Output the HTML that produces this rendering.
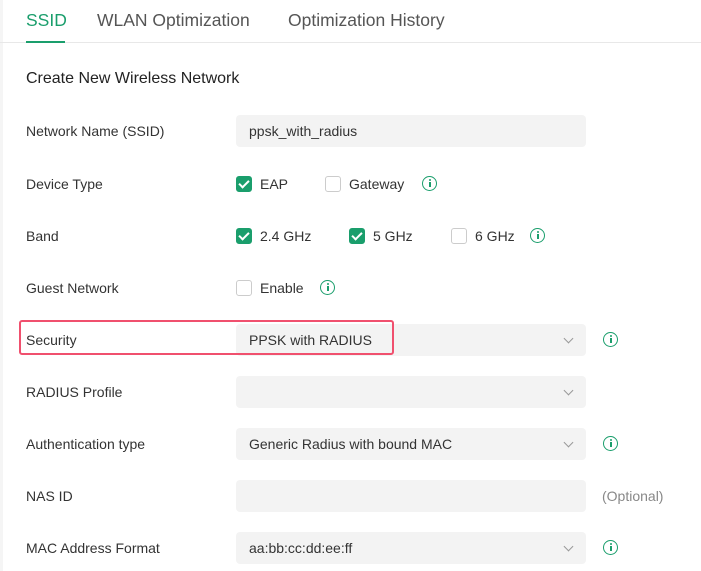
<!DOCTYPE html>
<html><head><style>
body{margin:0;width:701px;height:571px;background:#fff;font-family:"Liberation Sans",sans-serif;position:relative;overflow:hidden;color:#333}
.a{position:absolute;white-space:nowrap}
.tab{font-size:17.5px;color:#555;top:10px}
.lbl{font-size:14px;color:#333;left:26px}
.inp{position:absolute;left:236px;width:350px;height:32px;background:#f3f3f3;border-radius:4px;font-size:14px;color:#333;line-height:32px;text-indent:13px}
.chev{position:absolute;right:14px;top:11px;width:6px;height:6px;border-right:1.2px solid #999;border-bottom:1.2px solid #999;transform:rotate(45deg)}
.cb{position:absolute;width:14px;height:14px;border:1px solid #ccc;border-radius:3px;background:#fff}
.cb.on{background:#1a9e6c;border-color:#1a9e6c}
.cb.on:after{content:"";position:absolute;left:4px;top:1px;width:4px;height:8px;border-right:2px solid #fff;border-bottom:2px solid #fff;transform:rotate(45deg)}
.ct{position:absolute;font-size:14px;color:#333}
.info{position:absolute;width:13px;height:13px;border:1.5px solid #1a9e6c;border-radius:50%}
.info:before{content:"";position:absolute;left:5.5px;top:2px;width:2px;height:2px;background:#1a9e6c;border-radius:1px}
.info:after{content:"";position:absolute;left:5.5px;top:5px;width:2px;height:5px;background:#1a9e6c}
</style></head><body>
<div class="a" style="left:0;top:0;width:3px;height:571px;background:#f5f5f5"></div>
<div class="a tab" style="left:26px;color:#1a9e6c">SSID</div>
<div class="a tab" style="left:97px">WLAN Optimization</div>
<div class="a tab" style="left:288px">Optimization History</div>
<div class="a" style="left:0;top:42px;width:701px;height:1px;background:#e8e8e8"></div>
<div class="a" style="left:26px;top:41px;width:39px;height:2px;background:#1a9e6c"></div>
<div class="a" style="left:26px;top:70px;font-size:16px;color:#222">Create New Wireless Network</div>

<div class="a lbl" style="top:123px">Network Name (SSID)</div>
<div class="inp" style="top:115px">ppsk_with_radius</div>

<div class="a lbl" style="top:176px">Device Type</div>
<div class="cb on" style="left:236px;top:176px"></div><div class="ct" style="left:260px;top:176px">EAP</div>
<div class="cb" style="left:325px;top:176px"></div><div class="ct" style="left:349px;top:176px">Gateway</div>
<div class="info" style="left:422px;top:176px"></div>

<div class="a lbl" style="top:228px">Band</div>
<div class="cb on" style="left:236px;top:228px"></div><div class="ct" style="left:260px;top:228px">2.4 GHz</div>
<div class="cb on" style="left:349px;top:228px"></div><div class="ct" style="left:373px;top:228px">5 GHz</div>
<div class="cb" style="left:451px;top:228px"></div><div class="ct" style="left:475px;top:228px">6 GHz</div>
<div class="info" style="left:530px;top:228px"></div>

<div class="a lbl" style="top:280px">Guest Network</div>
<div class="cb" style="left:236px;top:280px"></div><div class="ct" style="left:260px;top:280px">Enable</div>
<div class="info" style="left:320px;top:280px"></div>

<div class="a lbl" style="top:332px">Security</div>
<div class="inp" style="top:324px">PPSK with RADIUS<div class="chev"></div></div>
<div class="a" style="left:19px;top:320px;width:371px;height:31px;border:2px solid #f0506e;border-radius:3px"></div>
<div class="info" style="left:603px;top:332px"></div>

<div class="a lbl" style="top:384px">RADIUS Profile</div>
<div class="inp" style="top:376px"><div class="chev"></div></div>

<div class="a lbl" style="top:436px">Authentication type</div>
<div class="inp" style="top:428px">Generic Radius with bound MAC<div class="chev"></div></div>
<div class="info" style="left:603px;top:436px"></div>

<div class="a lbl" style="top:488px">NAS ID</div>
<div class="inp" style="top:480px"></div>
<div class="a" style="left:602px;top:488px;font-size:14px;color:#888">(Optional)</div>

<div class="a lbl" style="top:540px">MAC Address Format</div>
<div class="inp" style="top:532px">aa:bb:cc:dd:ee:ff<div class="chev"></div></div>
<div class="info" style="left:603px;top:540px"></div>
</body></html>
